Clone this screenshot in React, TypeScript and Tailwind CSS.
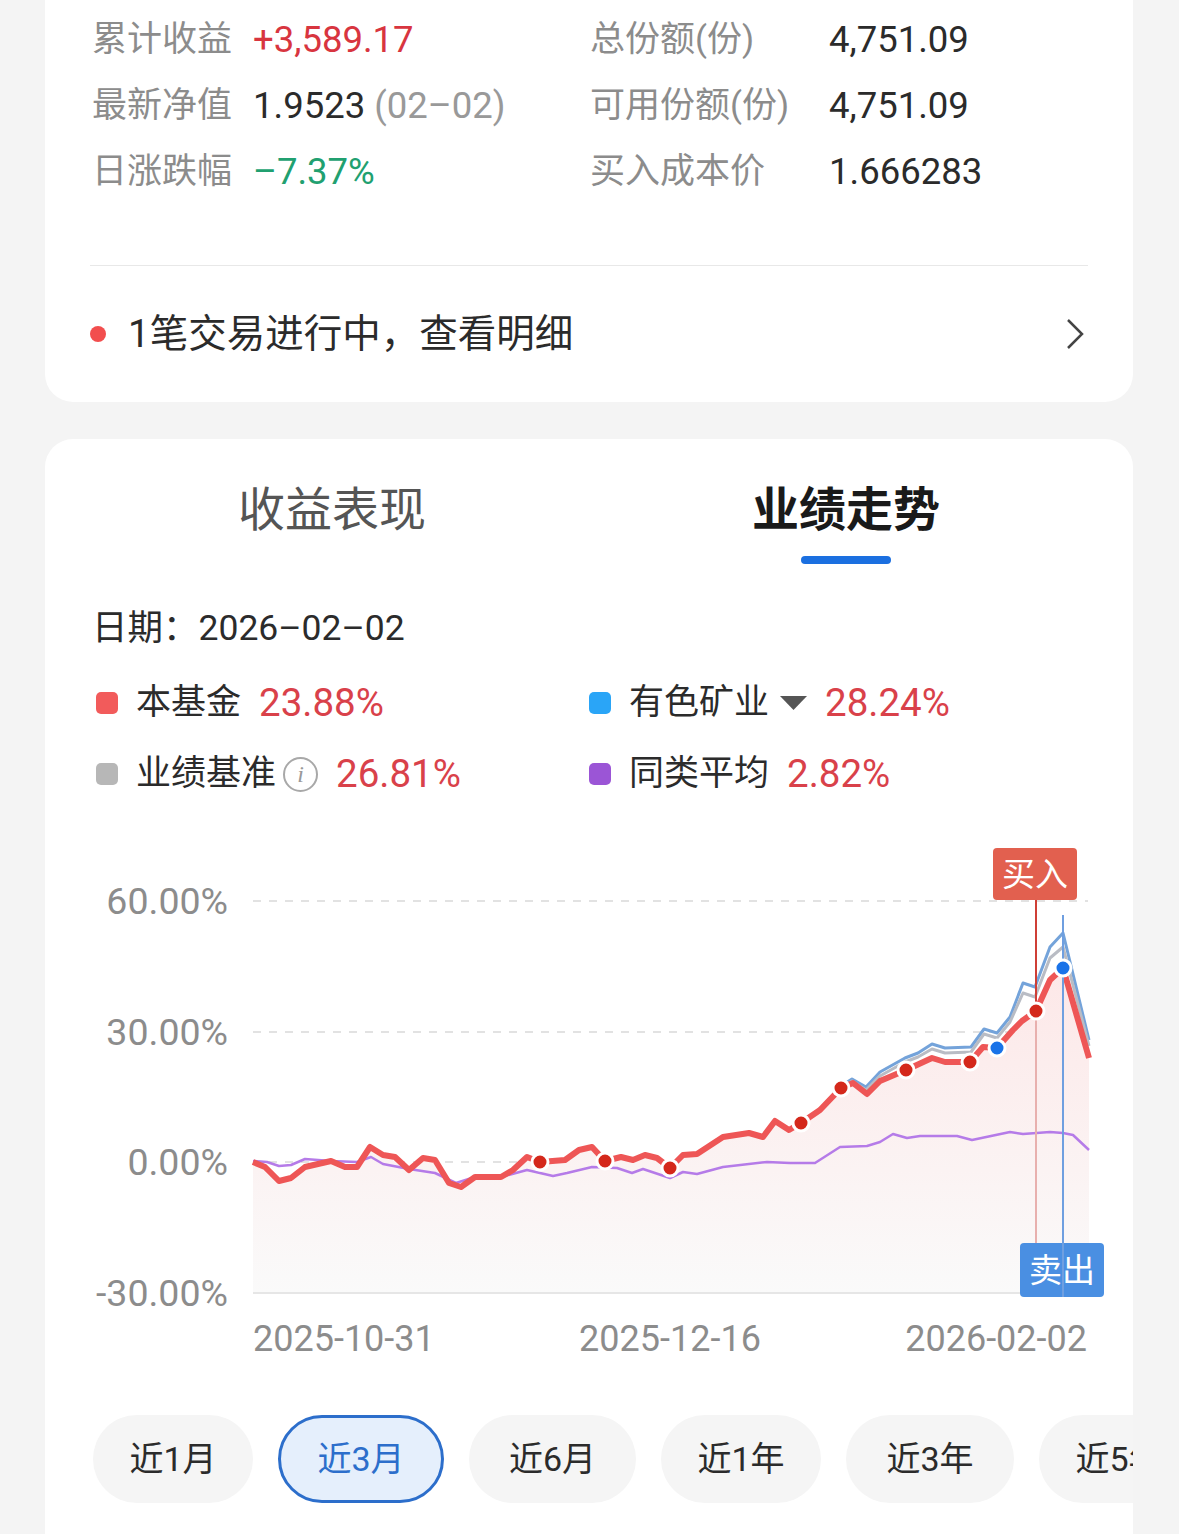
import React from 'react'

type Pt = [number, number]

const red: Pt[] = [
  [253, 1162], [265, 1167], [279, 1181], [291, 1178], [305, 1167], [331, 1161], [345, 1167], [357, 1167],
  [370, 1147], [383, 1155], [395, 1157], [409, 1170], [423, 1158], [435, 1160], [449, 1183], [461, 1187],
  [475, 1177], [501, 1177], [513, 1170], [527, 1157], [540, 1162], [565, 1160], [579, 1150], [592, 1147],
  [605, 1161], [621, 1157], [633, 1160], [645, 1155], [657, 1158], [670, 1168], [683, 1155], [697, 1154],
  [723, 1137], [749, 1133], [763, 1137], [775, 1121], [789, 1130], [801, 1123], [820, 1110], [841, 1088],
  [853, 1083], [867, 1094], [880, 1081], [906, 1070], [932, 1058], [945, 1062], [970, 1062], [983, 1047],
  [997, 1048], [1013, 1030], [1022, 1021], [1036, 1011], [1050, 980], [1063, 968], [1089, 1058],
]

const blue: Pt[] = [
  [801, 1123], [820, 1110], [841, 1086], [852, 1079], [866, 1087], [880, 1072], [905, 1058], [918, 1053],
  [932, 1044], [945, 1048], [971, 1047], [984, 1029], [997, 1033], [1010, 1017], [1023, 983], [1035, 987],
  [1050, 947], [1063, 933], [1089, 1040],
]

const gray: Pt[] = [
  [801, 1123], [820, 1110], [841, 1088], [852, 1081], [866, 1090], [880, 1076], [905, 1062], [918, 1057],
  [932, 1049], [945, 1053], [971, 1052], [984, 1034], [997, 1038], [1010, 1022], [1023, 993], [1035, 997],
  [1050, 958], [1063, 947], [1089, 1046],
]

const purple: Pt[] = [
  [253, 1161], [267, 1162], [279, 1166], [291, 1165], [305, 1159], [331, 1161], [357, 1162], [371, 1157],
  [383, 1164], [409, 1169], [435, 1173], [456, 1183], [475, 1177], [501, 1177], [527, 1170], [553, 1176],
  [567, 1173], [592, 1167], [617, 1168], [632, 1173], [643, 1169], [670, 1178], [683, 1172], [697, 1174],
  [723, 1167], [767, 1162], [790, 1163], [815, 1163], [840, 1147], [867, 1146], [880, 1142], [893, 1134],
  [907, 1138], [920, 1136], [957, 1136], [972, 1140], [1010, 1132], [1023, 1134], [1050, 1132], [1063, 1133],
  [1073, 1135], [1089, 1150],
]

const redDots: Pt[] = [[540, 1162], [605, 1161], [670, 1168], [801, 1123], [841, 1088], [906, 1070], [970, 1062], [1036, 1011]]
const blueDots: Pt[] = [[997, 1048], [1063, 968]]

const pts = (arr: Pt[]) => arr.map(([x, y]) => `${x},${y}`).join(' ')

const font = "Roboto, 'Noto Sans CJK SC', sans-serif"

function Chart() {
  const area = pts(red) + ' 1089,1293 253,1293'
  return (
    <svg width="1088" height="555" viewBox="45 820 1088 555" className="block" fontFamily={font}>
      <defs>
        <linearGradient id="area" x1="0" y1="940" x2="0" y2="1293" gradientUnits="userSpaceOnUse">
          <stop offset="0" stopColor="#fde6e6" />
          <stop offset="1" stopColor="#fafafa" />
        </linearGradient>
      </defs>

      {/* grid */}
      {[901, 1032, 1162].map((y) => (
        <line key={y} x1="253" x2="1088" y1={y} y2={y} stroke="#e2e2e2" strokeWidth="2" strokeDasharray="8 8" />
      ))}
      <polygon points={area} fill="url(#area)" />
      <line x1="253" x2="1088" y1="1293" y2="1293" stroke="#e6e6e6" strokeWidth="2" />

      {[
        ['60.00%', 901],
        ['30.00%', 1032],
        ['0.00%', 1162],
        ['-30.00%', 1293],
      ].map(([t, y]) => (
        <text key={t} x="228" y={Number(y) + 13} textAnchor="end" fontSize="37.5" fill="#8c8c8c">
          {t}
        </text>
      ))}
      <text x="253" y="1351" fontSize="36" fill="#8c8c8c">2025-10-31</text>
      <text x="670" y="1351" fontSize="36" fill="#8c8c8c" textAnchor="middle">2025-12-16</text>
      <text x="1087" y="1351" fontSize="36" fill="#8c8c8c" textAnchor="end">2026-02-02</text>

      {/* lines */}
      <polyline points={pts(purple)} fill="none" stroke="#b57be8" strokeWidth="2.5" strokeLinejoin="round" />
      <polyline points={pts(blue)} fill="none" stroke="#74a3da" strokeWidth="3" strokeLinejoin="round" />
      <polyline points={pts(gray)} fill="none" stroke="#b9bcc4" strokeWidth="3" strokeLinejoin="round" />
      <polyline points={pts(red)} fill="none" stroke="#ee5656" strokeWidth="6" strokeLinejoin="round" />

      {/* buy marker */}
      <rect x="993" y="848" width="84" height="52" rx="4" fill="#e2604f" />
      <text x="1035" y="886" fontSize="33" fill="#fff" textAnchor="middle">买入</text>
      <line x1="1036" x2="1036" y1="900" y2="1011" stroke="#cf3f36" strokeWidth="2" />
      <line x1="1036" x2="1036" y1="1011" y2="1293" stroke="#e8b0ae" strokeWidth="2" />

      {/* sell marker */}
      <rect x="1020" y="1243" width="84" height="54" rx="4" fill="#4a8fe2" />
      <text x="1062" y="1282" fontSize="33" fill="#fff" textAnchor="middle">卖出</text>
      <line x1="1063" x2="1063" y1="915" y2="1297" stroke="#6f9fe0" strokeWidth="2" />

      {redDots.map(([x, y]) => (
        <circle key={x} cx={x} cy={y} r="8" fill="#d4281b" stroke="#fff" strokeWidth="3" />
      ))}
      {blueDots.map(([x, y]) => (
        <circle key={x} cx={x} cy={y} r="8" fill="#1a73e8" stroke="#fff" strokeWidth="3" />
      ))}
    </svg>
  )
}

function Stat({ label, labelW, children }: { label: string; labelW: string; children: React.ReactNode }) {
  return (
    <div className="flex h-[66px] items-center">
      <span className={`${labelW} text-[35px] text-[#8c8c8c]`}>{label}</span>
      <span className="text-[36.5px] text-[#2b2b2b]">{children}</span>
    </div>
  )
}

function LegendItem({ color, label, value, extra }: { color: string; label: string; value: string; extra?: React.ReactNode }) {
  return (
    <div className="flex h-[50px] items-center">
      <span className={`ml-[4px] h-[22px] w-[22px] rounded-[5px] ${color}`} />
      <span className="ml-[18px] text-[35px] text-[#2b2b2b]">{label}</span>
      {extra}
      <span className="ml-[18px] text-[38.5px] text-[#d9414a]">{value}</span>
    </div>
  )
}

const ranges = [
  { label: '近1月', w: 'w-[160px]' },
  { label: '近3月', w: 'w-[166px]' },
  { label: '近6月', w: 'w-[167px]' },
  { label: '近1年', w: 'w-[160px]' },
  { label: '近3年', w: 'w-[168px]' },
  { label: '近5年', w: 'w-[160px]' },
]

export default function App() {
  return (
    <div className="min-h-[1534px] w-[1179px] overflow-hidden bg-[#f4f4f4] font-[family-name:Roboto,'Noto_Sans_CJK_SC',sans-serif]">
      {/* holding card */}
      <div className="ml-[45px] w-[1088px] rounded-b-[28px] bg-white px-[45px]">
        <div className="grid grid-cols-[498px_1fr] pl-[2px] pt-[7px]">
          <div>
            <Stat label="累计收益" labelW="w-[161px]">
              <span className="text-[#d8353f]">+3,589.17</span>
            </Stat>
            <Stat label="最新净值" labelW="w-[161px]">
              1.9523 <span className="text-[#999]">(02–02)</span>
            </Stat>
            <Stat label="日涨跌幅" labelW="w-[161px]">
              <span className="text-[#21a070]">–7.37%</span>
            </Stat>
          </div>
          <div>
            <Stat label="总份额(份)" labelW="w-[239px]">4,751.09</Stat>
            <Stat label="可用份额(份)" labelW="w-[239px]">4,751.09</Stat>
            <Stat label="买入成本价" labelW="w-[239px]">1.666283</Stat>
          </div>
        </div>
        <div className="mt-[60px] h-px bg-[#e8e8e8]" />
        <div className="flex h-[136px] items-center">
          <span className="h-[16px] w-[16px] rounded-full bg-[#f24e4e]" />
          <span className="ml-[22px] text-[38.5px] text-[#2b2b2b]">1笔交易进行中，查看明细</span>
          <svg className="ml-auto mr-[3px]" width="20" height="34" viewBox="0 0 20 34">
            <polyline points="3,3 17,17 3,31" fill="none" stroke="#444" strokeWidth="2.5" />
          </svg>
        </div>
      </div>

      {/* performance card */}
      <div className="ml-[45px] mt-[37px] w-[1088px] overflow-hidden rounded-t-[28px] bg-white pb-[40px]">
        <div className="flex px-[30px] pt-[41px]">
          <div className="flex flex-1 flex-col items-center">
            <span className="h-[60px] text-[47px] leading-[60px] text-[#555]">收益表现</span>
            <span className="mt-[16px] h-[8px] w-[90px]" />
          </div>
          <div className="flex flex-1 flex-col items-center">
            <span className="h-[60px] text-[47px] font-bold leading-[60px] text-[#1a1a1a]">业绩走势</span>
            <span className="mt-[16px] h-[8px] w-[90px] rounded-full bg-[#1b6fe0]" />
          </div>
        </div>

        <div className="px-[47px]">
          <div className="mt-[42px] text-[35.5px] leading-[44px] text-[#2b2b2b]">日期：2026–02–02</div>
          <div className="mt-[28px] grid grid-cols-[493px_1fr] gap-y-[21px]">
            <LegendItem color="bg-[#f25b5b]" label="本基金" value="23.88%" />
            <LegendItem
              color="bg-[#2aa5f7]"
              label="有色矿业"
              value="28.24%"
              extra={
                <svg className="ml-[11px]" width="27" height="16" viewBox="0 0 27 16">
                  <polygon points="0,1 27,1 13.5,15" fill="#555" />
                </svg>
              }
            />
            <LegendItem
              color="bg-[#b7b7b7]"
              label="业绩基准"
              value="26.81%"
              extra={
                <span className="ml-[7px] flex h-[35px] w-[35px] items-center justify-center rounded-full border-2 border-[#a8a8a8] font-['Liberation_Serif',serif] text-[24px] italic text-[#999]">
                  i
                </span>
              }
            />
            <LegendItem color="bg-[#9b55d6]" label="同类平均" value="2.82%" />
          </div>
        </div>

        <div className="mt-[21px]">
          <Chart />
        </div>

        <div className="mt-[40px] flex gap-[25px] pl-[48px]">
          {ranges.map((r) =>
            r.label === '近3月' ? (
              <div
                key={r.label}
                className={`flex h-[88px] shrink-0 items-center justify-center rounded-full border-[3px] border-[#2c6ecb] bg-[#e5effc] text-[34px] text-[#2c6ecb] ${r.w}`}
              >
                {r.label}
              </div>
            ) : (
              <div
                key={r.label}
                className={`flex h-[88px] shrink-0 items-center justify-center rounded-full bg-[#f5f5f5] text-[34px] text-[#2b2b2b] ${r.w}`}
              >
                {r.label}
              </div>
            )
          )}
        </div>
      </div>
    </div>
  )
}
